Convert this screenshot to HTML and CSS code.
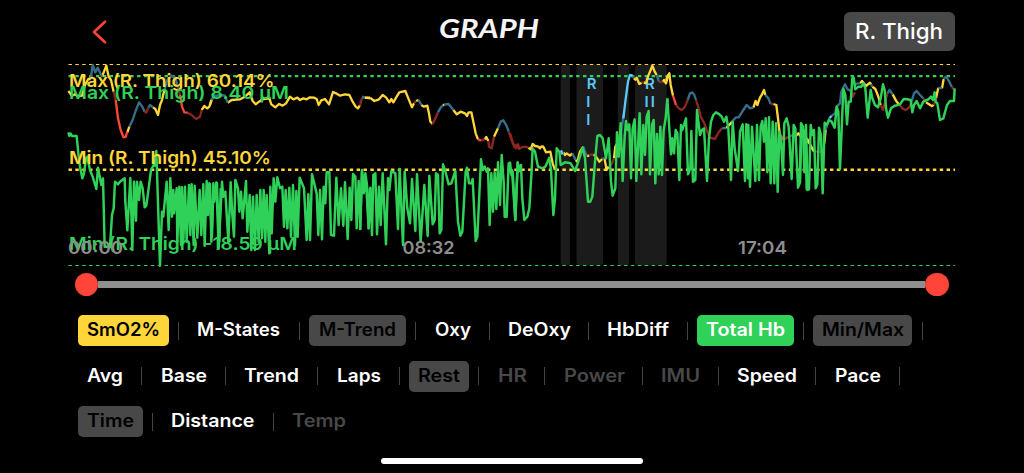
FILE: index.html
```html
<!DOCTYPE html>
<html lang="en">
<head>
<meta charset="utf-8">
<title>Graph</title>
<link rel="stylesheet" href="styles.css">
</head>
<body>
<main class="screen">
  <header class="header">
    <button class="back" aria-label="Back"><svg width="16" height="24" viewBox="0 0 16 24"><path d="M14 1.8 3 12l11 10.2"/></svg></button>
    <h1 class="title"><svg width="104" height="30"><text x="1" y="24" textLength="100" lengthAdjust="spacingAndGlyphs">GRAPH</text></svg></h1>
    <button class="sensor"><svg width="89" height="39"><text x="0" y="27" textLength="88" lengthAdjust="spacingAndGlyphs">R. Thigh</text></svg></button>
  </header>

  <svg class="chart" width="1024" height="213" viewBox="0 55 1024 213">
    <g class="rest">
      <rect x="560.7" y="64.5" width="9.3" height="201" rx="3"/>
      <rect x="576.5" y="64.5" width="26.5" height="201" rx="4"/>
      <rect x="617.8" y="64.5" width="11.2" height="201" rx="3"/>
      <rect x="635" y="64.5" width="31.7" height="201" rx="4"/>
    </g>
    <g class="limit">
      <path class="y thin" d="M68.5 64.5H955"/>
      <path class="g" d="M68.5 76.1H955"/>
      <path class="y" d="M68.5 169.8H955"/>
      <path class="g thin" d="M68.5 265.5H955"/>
    </g>
    <g class="lap">
      <text x="586.7" y="88.8">R</text><text x="586.3" y="106.5">I</text><text x="586.3" y="125">I</text>
      <text x="645" y="88.8">R</text><text x="644.5" y="106.5" textLength="10.5">II</text>
    </g>
    <g class="smo2">
      <g transform="translate(60 55) scale(.33333)">
        <path class="y" d="M25 108 36 122 45 118 55 124 66 122 75 90 85 72 92 72M126 65 132 50 139 32 146 65 153 75 161 110M202 232 208 215M279 157 286 162 294 180 300 150 306 135 313 105M425 165 433 153 442 160 448 155 457 130"/>
        <path class="b" d="M92 72 98 30 106 52 113 38 121 55 126 65M208 215 218 195 228 165 237 142 247 155 254 170M265 158 270 150 279 157M313 105 322 75 335 62 346 68 352 90M457 130 465 122 480 122"/>
        <path class="d" d="M161 110 167 135M254 170 258 173 265 158M352 90 360 120M383 173 395 180 408 192 420 185 425 165"/>
        <path class="r" d="M167 135 174 190 182 225 190 246 197 246 202 230M360 120 366 155 373 172 383 173"/>
      </g>
      <g transform="translate(210 55) scale(.33333)">
        <path class="y" d="M0 150 4 135M53 143 65 135 90 133 105 125 119 112 128 138 137 148 147 140 160 132 178 130 184 148 196 157 207 147 218 152 228 145 240 125 250 133 262 128 270 135 280 130 290 133 300 127 312 128 320 132 326 150 334 136 345 132 357 148 363 130 369 111 378 115 390 122 405 118 418 120 428 140 437 155 444 160 450 150M464 128H480"/>
        <path class="b" d="M4 135 12 125 30 120 45 122 53 143M456 126 464 128"/>
        <path class="d" d="M450 152 456 128"/>
      </g>
      <g transform="translate(360 55) scale(.33333)">
        <path class="y" d="M14 128 33 130 43 138 57 133 68 120 78 127 88 142 94 132 100 142 110 125 118 112 136 108 145 130 156 157 162 145M168 138 176 135M184 150 192 155 202 152 207 175 211 200 218 207M249 151 253 148M280 165 290 178 302 170 315 175 321 183 326 172 334 172 340 200 347 235 354 253M374 253 379 246 385 258M402 245 414 220"/>
        <path class="b" d="M6 125 14 128M176 135 184 150M234 172 242 158 249 151M253 148 266 147 280 165M414 220 422 200 430 196 440 213 446 230"/>
        <path class="d" d="M162 145 168 138M218 207 226 190 234 172M363 257 374 253M385 258 387 275 395 280 402 245M446 230 455 255 463 275 470 270 474 268 478 280"/>
        <path class="r" d="M354 253 363 257"/>
      </g>
      <g transform="translate(510 55) scale(.33333)">
        <path class="y" d="M55 278 62 283 68 267 75 273 85 275 90 280 95 274 100 275 108 292 121 290 128 325 135 345M160 292 165 300 170 295 180 302 187 295M197 315 202 320 210 290 220 275M230 303 238 302M250 298 258 305 268 320 277 312M283 308 290 345 296 335M312 310 316 275 322 265M372 70 376 74 380 68 388 87 395 83M401 82 408 85 415 62 422 45 427 32 434 50 440 60M458 80 462 75 468 85 475 60 480 55"/>
        <path class="b" d="M153 287 160 297M187 295 197 315M220 275 230 303M277 312 283 308M328 260 342 175M368 62 372 70M440 60 447 80"/>
        <path class="c" d="M340 190 346 140 354 80 360 60 368 62M153 286 157 298"/>
        <path class="d" d="M0 235 8 262 17 280 22 272 27 282 35 277 45 275 55 278M238 300 250 298M296 335 306 325 312 310M395 83 401 82M447 80 458 82"/>
      </g>
      <g transform="translate(650 55) scale(.33333)">
        <path class="y" d="M48 75 58 55 62 90 69 122M228 219 238 210 246 200M310 158 317 138 322 150 330 128 336 118 342 105 346 120M370 147 379 150 384 190 389 235M430 240 436 245 445 235 452 244 458 240 468 252 478 265"/>
        <path class="b" d="M113 135 120 115 127 112 133 120 138 135M215 220 228 219M246 200 258 187 266 187 280 165 290 150 300 160 310 158M346 120 355 130 362 147M415 245 430 240"/>
        <path class="d" d="M78 150 86 160 95 165 105 155 113 135M138 135 146 160 152 185 163 205 172 230 180 248 195 252 204 235 215 220M362 147 370 147M400 255 415 245"/>
        <path class="r" d="M69 122 78 150M389 235 400 255"/>
      </g>
      <g transform="translate(800 55) scale(.33333)">
        <path class="y" d="M0 238 10 248 22 252 30 268 42 290M73 265 77 225M180 85 186 78 198 93 210 83 213 88M217 95 226 102 235 125 242 150M278 118 288 137 298 150M378 142 395 153 402 150M408 130 415 98M426 100 431 72"/>
        <path class="b" d="M77 225 88 190M95 182 105 175 110 155 120 145 124 110 135 88 142 102 152 108M165 90 170 86 180 85M213 88 217 95M262 115 269 105 278 118M335 140 342 115 350 108 360 120 370 130M415 98 426 100M431 72 438 65 448 80 456 97"/>
        <path class="c" d="M88 190 95 182"/>
        <path class="d" d="M42 290H65M152 108 158 125 165 112M242 150 249 165 262 115M298 150 307 160 317 165 328 157 335 140M370 130 378 142M402 150 408 130M456 97 462 103"/>
      </g>
    </g>
    <g class="hb">
      <path transform="translate(60 55) scale(.33333)" d="M25 232 28 243 32 236 36 243 50 243 55 295 60 335 67 370 72 355 78 310 82 305 90 345 98 365 109 402 114 338 124 390 129 370 134 575 150 575 156 480 161 460 165 380 174 388 180 380 194 370 196 440 202 526 211 370 217 585 222 380 228 497 231 380 237 435 242 380 248 400 254 457 259 452 264 415 273 345 281 330 284 332 289 288 300 632 306 470 310 485 320 380 326 525 331 370 336 485 340 405 342 475 350 400 352 560 358 395 363 570 366 397 370 565 375 395 380 560 387 390 391 540 395 388 401 570 404 392 412 548 419 405 424 540 430 388 434 572 440 378 444 480 448 385 456 545 460 385 463 440 471 385 474 480 478 560 482 400"/>
      <path transform="translate(210 55) scale(.33333)" d="M0 385 4 560 10 420 19 382 26 580 36 380 40 425 46 410 55 560 62 382 67 480 72 545 76 375 84 400 88 470 93 410 98 490 108 378 112 530 119 420 124 585 129 425 135 585 140 420 146 560 151 405 156 550 161 405 166 560 170 420 178 595 181 395 185 535 191 370 196 440 202 367 210 400 217 395 222 515 227 405 232 520 238 398 243 545 249 390 255 570 259 408 263 545 269 368 282 400 290 555 295 418 300 555 306 358 320 415 325 540 330 405 336 553 341 395 346 445 350 352 358 352 363 540 372 542 379 368 386 510 393 400 400 512 405 382 413 552 419 398 424 495 429 357 436 365 440 520 446 378 451 522 456 345 460 400 466 355 471 390 476 520 480 400"/>
      <path transform="translate(360 55) scale(.33333)" d="M0 525 6 348 11 415 18 380 26 520 31 398 36 540 40 360 46 355 51 538 57 395 62 510 68 355 78 568 84 370 88 405 94 348 106 355 114 522 119 342 129 570 134 350 142 460 150 505 156 372 166 528 171 358 182 560 193 390 203 543 208 362 218 508 224 495 228 355 234 360 239 535 244 525 249 328 255 345 266 388 274 385 286 348 294 500 301 542 307 530 317 350 321 338 327 385 334 385 338 372 347 558 352 545 363 313 368 345 374 335 380 350 384 340 389 510 394 355 399 470 404 352 409 462 414 322 420 450 425 300 431 380 434 485 440 485 446 325 451 350 456 345 466 495 473 322 478 348 483 330"/>
      <path transform="translate(510 55) scale(.33333)" d="M0 320 4 360 8 350 16 495 23 325 28 345 33 330 37 430 43 495 52 485 58 460 65 345 68 280 75 290 84 335 97 340 106 335 118 308 123 345 130 480 135 430 138 340 140 280 148 290 152 330 165 322 182 325 195 348 205 320 218 278 225 310 234 440 241 440 247 425 255 320 262 243 270 240 278 250 288 310 296 250 303 380 308 422 316 400 321 232 326 305 332 205 338 378 344 245 348 198 353 225 358 208 363 370 368 220 374 193 379 378 389 175 394 358 400 210 405 300 410 185 416 168 420 358 426 210 431 195 436 385 441 237 446 358 451 215 456 360 461 225 467 190 472 130"/>
      <path transform="translate(650 55) scale(.33333)" d="M52 130 63 298 67 250 72 295 77 225 82 235 88 375 93 210 97 225 108 190 114 358 121 340 124 228 129 380 136 375 141 165 150 240 156 225 162 220 171 378 177 250 183 200 190 180 198 172 208 178 215 185 222 200 229 185 235 220 243 375 248 200 254 280 264 348 270 230 278 208 285 378 289 208 294 370 295 210 300 395 306 215 316 378 321 210 327 375 332 215 337 198 342 260 347 190 352 352 357 187 362 385 368 200 373 385 378 205 383 410 388 230 393 260 399 360 403 205 410 190 416 215 425 372 431 210 436 220 444 398 449 385 453 205 459 215 463 352 468 210 473 405 478 400"/>
      <path transform="translate(800 55) scale(.33333)" d="M0 385 5 208 9 235 16 225 20 403 27 403 32 210 37 240 42 225 47 400 52 388 57 218 63 240 68 415 74 203 80 210 87 195 95 200 104 218 110 155 115 170 120 342 130 102 136 120 141 208 146 140 152 140 157 70 161 68 166 103 175 95 184 95 190 85 196 100 203 188 212 105 217 130 225 150 234 157 242 130 249 88 254 105 258 160 264 188 273 160 283 153 300 148 311 132 322 133 332 135 337 172 342 150 350 138 360 160 370 140 385 133 393 125 399 135 404 112 407 140 412 145 420 195 430 190 441 150 450 138 462 138 464 100"/>
    </g>
    <g class="labels">
      <text class="y" x="69" y="87.4" textLength="205.5" lengthAdjust="spacingAndGlyphs">Max (R. Thigh) 60.14%</text>
      <text class="y" x="69" y="164.3" textLength="202" lengthAdjust="spacingAndGlyphs">Min (R. Thigh) 45.10%</text>
      <text class="g" x="69" y="98.9" textLength="220" lengthAdjust="spacingAndGlyphs">Max (R. Thigh) 8.40 µM</text>
      <text class="g" x="69" y="250.4" textLength="228" lengthAdjust="spacingAndGlyphs">Min (R. Thigh) -18.59 µM</text>
      <text class="t" x="68" y="254" textLength="55" lengthAdjust="spacingAndGlyphs">00:00</text>
      <text class="t" x="402.5" y="254" textLength="52" lengthAdjust="spacingAndGlyphs">08:32</text>
      <text class="t" x="738" y="254" textLength="49" lengthAdjust="spacingAndGlyphs">17:04</text>
    </g>
  </svg>

  <div class="slider"><span class="knob"></span><span class="track"></span><span class="knob"></span></div>

  <section class="options">
    <div class="row">
      <span class="chip yellow"><svg width="73.3" height="31"><text y="21.2" textLength="73" lengthAdjust="spacingAndGlyphs">SmO2%</text></svg></span><i></i>
      <span class="chip"><svg width="83.3" height="31"><text y="21.2" textLength="83" lengthAdjust="spacingAndGlyphs">M-States</text></svg></span><i></i>
      <span class="chip gray"><svg width="79" height="31"><text x="1" y="21.2" textLength="77" lengthAdjust="spacingAndGlyphs">M-Trend</text></svg></span><i></i>
      <span class="chip"><svg width="35.8" height="31"><text y="21.2" textLength="36" lengthAdjust="spacingAndGlyphs">Oxy</text></svg></span><i></i>
      <span class="chip"><svg width="61.8" height="31"><text y="21.2" textLength="63" lengthAdjust="spacingAndGlyphs">DeOxy</text></svg></span><i></i>
      <span class="chip"><svg width="62" height="31"><text y="21.2" textLength="62" lengthAdjust="spacingAndGlyphs">HbDiff</text></svg></span><i></i>
      <span class="chip green"><svg width="78.3" height="31"><text y="21.2" textLength="79" lengthAdjust="spacingAndGlyphs">Total Hb</text></svg></span><i></i>
      <span class="chip gray"><svg width="81.3" height="31"><text y="21.2" textLength="82" lengthAdjust="spacingAndGlyphs">Min/Max</text></svg></span><i></i>
    </div>
    <div class="row">
      <span class="chip"><svg width="36.5" height="31"><text y="21.2" textLength="36" lengthAdjust="spacingAndGlyphs">Avg</text></svg></span><i></i>
      <span class="chip"><svg width="46" height="31"><text y="21.2" textLength="46" lengthAdjust="spacingAndGlyphs">Base</text></svg></span><i></i>
      <span class="chip"><svg width="55.3" height="31"><text y="21.2" textLength="55" lengthAdjust="spacingAndGlyphs">Trend</text></svg></span><i></i>
      <span class="chip"><svg width="44" height="31"><text y="21.2" textLength="44" lengthAdjust="spacingAndGlyphs">Laps</text></svg></span><i></i>
      <span class="chip gray"><svg width="42" height="31"><text y="21.2" textLength="42" lengthAdjust="spacingAndGlyphs">Rest</text></svg></span><i></i>
      <span class="chip off"><svg width="28.5" height="31"><text y="21.2" textLength="29" lengthAdjust="spacingAndGlyphs">HR</text></svg></span><i></i>
      <span class="chip off"><svg width="60.5" height="31"><text y="21.2" textLength="61" lengthAdjust="spacingAndGlyphs">Power</text></svg></span><i></i>
      <span class="chip off"><svg width="38.3" height="31"><text y="21.2" textLength="39" lengthAdjust="spacingAndGlyphs">IMU</text></svg></span><i></i>
      <span class="chip"><svg width="60" height="31"><text y="21.2" textLength="60" lengthAdjust="spacingAndGlyphs">Speed</text></svg></span><i></i>
      <span class="chip"><svg width="46.5" height="31"><text y="21.2" textLength="46" lengthAdjust="spacingAndGlyphs">Pace</text></svg></span><i></i>
    </div>
    <div class="row">
      <span class="chip gray"><svg width="47" height="31"><text y="21.2" textLength="47" lengthAdjust="spacingAndGlyphs">Time</text></svg></span><i></i>
      <span class="chip"><svg width="83.5" height="31"><text y="21.2" textLength="83.5" lengthAdjust="spacingAndGlyphs">Distance</text></svg></span><i></i>
      <span class="chip off"><svg width="54" height="31"><text y="21.2" textLength="54" lengthAdjust="spacingAndGlyphs">Temp</text></svg></span>
    </div>
  </section>
  <div class="home"></div>
</main>
</body>
</html>
```
FILE: styles.css
```css
* { box-sizing: border-box; }
body { margin: 0; background: #000; font-family: Inter, "Liberation Sans", sans-serif; }
.screen { width: 1024px; height: 473px; display: flex; flex-direction: column; overflow: hidden; background: #000; }
svg { display: block; flex: none; overflow: visible; }
button { border: 0; background: none; padding: 0; }

.header { height: 55px; flex: none; display: grid; grid-template-columns: 1fr auto 1fr; padding: 12.4px 69px 0 91px; }
.back { justify-self: start; height: 39px; display: flex; align-items: center; }
.back path { fill: none; stroke: #ff453a; stroke-width: 2.7; stroke-linecap: round; stroke-linejoin: round; }
.title { margin: 2px 66px 0 0; }
.title text { font: italic 700 27.5px Lato, sans-serif; fill: #f4f4f4; }
.sensor { justify-self: end; height: 39px; padding: 0 11px; border-radius: 6px; background: #484848; }
.sensor text { font: 500 22px Inter, sans-serif; fill: #fff; }

.chart { height: 213px; }
.rest rect { fill: #1b1b1b; }
.limit path { stroke-width: 2.4; stroke-dasharray: 3.43 3.43; }
.limit .thin { stroke-width: 1.2; }
.limit .y { stroke: #ffd63a; }
.limit .g { stroke: #30d158; }
.lap text { font: 600 15px Inter, sans-serif; fill: #5ac8fa; }
.smo2 path { fill: none; stroke-width: 7; stroke-linejoin: round; }
.smo2 .y { stroke: #ffd63a; }
.smo2 .b { stroke: #356f8b; }
.smo2 .c { stroke: #5ac8fa; }
.smo2 .d { stroke: #8c2621; }
.smo2 .r { stroke: #ff453a; }
.hb path { fill: none; stroke: #30d158; stroke-width: 7.4; stroke-linejoin: round; }
.labels text { font-size: 17.5px; font-weight: 600; }
.labels .y { fill: #ffd63a; }
.labels .g { fill: #30d158; }
.labels .t { fill: #8e8e8e; }

.slider { height: 33px; flex: none; display: flex; align-items: center; padding: 0 75.3px 0 75px; }
.track { flex: 1; height: 7px; background: #8f8f8f; }
.knob { width: 23.4px; height: 23.4px; border-radius: 50%; background: #ff453a; }

.options { height: 157px; flex: none; padding: 14px 0 0 77.6px; display: flex; flex-direction: column; gap: 14.7px; }
.row { height: 31px; display: flex; align-items: center; gap: 9.23px; }
.row i { width: 1px; height: 18px; background: #444; flex: none; }
.chip { height: 31px; flex: none; padding: 0 9px; border-radius: 5px; }
.chip text { font-size: 18px; font-weight: 600; fill: #fff; }
.yellow { background: #ffd63a; }
.chip.yellow text { fill: #000; }
.green { background: #30d158; }
.gray { background: #484848; }
.chip.gray text { fill: #000; }
.chip.off text { fill: #484848; }
.home { width: 262px; height: 6px; border-radius: 3px; background: #fff; margin-left: 381px; }
```
